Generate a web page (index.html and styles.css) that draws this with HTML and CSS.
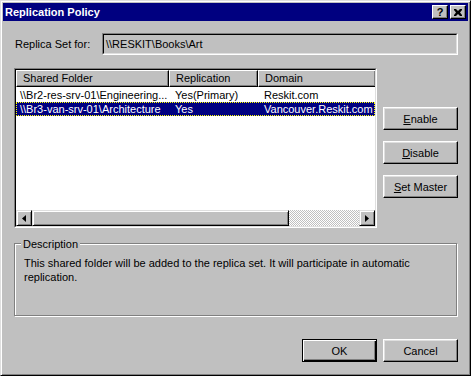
FILE: index.html
```html
<!DOCTYPE html>
<html lang="en">
<head>
  <meta charset="UTF-8" />
  <title>Replication Policy</title>
  <link rel="stylesheet" href="styles.css">
</head>
<body>
  <div class="window">
    <div class="titlebar">
      <span class="title">Replication Policy</span>
      <div class="caption-buttons">
        <span class="cap-btn help">?</span>
        <span class="cap-btn">
          <svg width="8" height="7" viewBox="0 0 8 7"><path d="M0 0h2l2 2 2-2h2v1l-2 2.5 2 2.5v1h-2l-2-2-2 2h-2v-1l2-2.5-2-2.5z" fill="#000"/></svg>
        </span>
      </div>
    </div>

    <div class="content">
      <div class="replica-row">
        <span class="replica-label">Replica Set for:</span>
        <div class="sunken textbox-outer">
          <div class="sunken-inner textbox">\\RESKIT\Books\Art</div>
        </div>
      </div>

      <div class="main-row">
        <div class="sunken listview">
          <div class="sunken-inner list-inner">
            <div class="list-body">
              <div class="list-header">
                <div class="head-cell">Shared Folder</div>
                <div class="head-cell">Replication</div>
                <div class="head-cell">Domain</div>
              </div>
              <div class="list-row">
                <div class="cell first">\\Br2-res-srv-01\Engineering...</div>
                <div class="cell">Yes(Primary)</div>
                <div class="cell">Reskit.com</div>
              </div>
              <div class="list-row selected">
                <div class="cell first">\\Br3-van-srv-01\Architecture</div>
                <div class="cell">Yes</div>
                <div class="cell">Vancouver.Reskit.com</div>
              </div>
            </div>
            <div class="hscroll">
              <div class="raised scroll-btn">
                <svg width="4" height="7" viewBox="0 0 4 7"><path d="M4 0v7L0 3.5z" fill="#000"/></svg>
              </div>
              <div class="raised scroll-thumb"></div>
              <div class="scroll-track"></div>
              <div class="raised scroll-btn">
                <svg width="4" height="7" viewBox="0 0 4 7"><path d="M0 0v7l4-3.5z" fill="#000"/></svg>
              </div>
            </div>
          </div>
        </div>

        <div class="side-buttons">
          <button class="btn"><u>E</u>nable</button>
          <button class="btn"><u>D</u>isable</button>
          <button class="btn"><u>S</u>et Master</button>
        </div>
      </div>

      <div class="groupbox">
        <span class="group-label">Description</span>
        <p class="group-text">This shared folder will be added to the replica set. It will participate in automatic replication.</p>
      </div>

      <div class="dialog-buttons">
        <button class="btn default">OK</button>
        <button class="btn">Cancel</button>
      </div>
    </div>
  </div>
</body>
</html>
```

FILE: styles.css
```css
body {
  margin: 0;
  font-family: 'Liberation Sans', Arial, sans-serif;
  font-size: 11px;
  color: #000;
  background: #c0c0c0;
}

.window {
  width: 471px;
  height: 376px;
  box-sizing: border-box;
  background: #c0c0c0;
  border: 1px solid;
  border-color: #dfdfdf #000 #000 #dfdfdf;
  box-shadow: inset 1px 1px #fff, inset -1px -1px #808080;
  padding: 2px;
  display: flex;
  flex-direction: column;
}

.titlebar {
  height: 18px;
  background: #000080;
  color: #fff;
  display: flex;
  align-items: center;
  justify-content: space-between;
}

.title {
  font-weight: bold;
  padding-left: 2px;
  line-height: 18px;
}

.caption-buttons {
  display: flex;
  gap: 2px;
  margin-right: 2px;
}

.cap-btn {
  width: 16px;
  height: 14px;
  box-sizing: border-box;
  background: #c0c0c0;
  border: 1px solid;
  border-color: #fff #000 #000 #fff;
  box-shadow: inset -1px -1px #808080;
  display: flex;
  align-items: center;
  justify-content: center;
  color: #000;
}

.help {
  font-weight: bold;
  font-size: 11px;
  line-height: 12px;
}

.content {
  flex: 1;
  padding: 0 10px 0 11px;
  display: flex;
  flex-direction: column;
}

.replica-row {
  margin-top: 12px;
  height: 22px;
  display: flex;
  align-items: center;
}

.replica-label {
  width: 88px;
  padding-left: 1px;
  box-sizing: border-box;
}

/* two-line sunken edge */
.sunken {
  border: 1px solid;
  border-color: #808080 #fff #fff #808080;
  box-sizing: border-box;
}

.sunken-inner {
  border: 1px solid;
  border-color: #000 #dfdfdf #dfdfdf #000;
  box-sizing: border-box;
  height: 100%;
}

.textbox-outer {
  flex: 1;
  height: 22px;
}

.textbox {
  padding-left: 2px;
  line-height: 18px;
}

.main-row {
  margin-top: 13px;
  display: flex;
}

.listview {
  width: 363px;
  height: 160px;
}

.list-inner {
  display: flex;
  flex-direction: column;
}

.list-body {
  flex: 1;
  background: #fff;
  overflow: hidden;
}

.list-header,
.list-row {
  display: grid;
  grid-template-columns: 153px 89px 118px;
}

.list-header {
  height: 17px;
  margin-bottom: 1px;
}

.head-cell {
  background: #c0c0c0;
  border: 1px solid;
  border-color: #fff #000 #000 #fff;
  box-shadow: inset -1px -1px #808080;
  padding-left: 6px;
  line-height: 14px;
  white-space: nowrap;
}

.list-row {
  height: 14px;
  line-height: 14px;
  white-space: nowrap;
}

.cell {
  padding-left: 6px;
  overflow: hidden;
}

.cell.first {
  padding-left: 4px;
}

.list-row.selected {
  background: #000080;
  color: #fff;
  outline: 1px dotted #ffff00;
  outline-offset: -1px;
}

.hscroll {
  height: 16px;
  display: flex;
}

.raised {
  box-sizing: border-box;
  background: #c0c0c0;
  border: 1px solid;
  border-color: #dfdfdf #000 #000 #dfdfdf;
  box-shadow: inset 1px 1px #fff, inset -1px -1px #808080;
}

.scroll-btn {
  width: 16px;
  display: flex;
  align-items: center;
  justify-content: center;
}

.scroll-thumb {
  width: 257px;
}

.scroll-track {
  flex: 1;
  background: repeating-conic-gradient(#c0c0c0 0 25%, #fff 0 50%) 0 0 / 2px 2px;
}

.side-buttons {
  margin-left: 6px;
  margin-top: 39px;
  display: flex;
  flex-direction: column;
  gap: 11px;
}

.btn {
  width: 75px;
  height: 23px;
  padding: 0;
  font-family: inherit;
  font-size: 11px;
  color: #000;
  background: #c0c0c0;
  border: 1px solid;
  border-color: #fff #000 #000 #fff;
  box-shadow: inset -1px -1px #808080, inset 1px 1px #dfdfdf;
}

.btn.default {
  border-color: #000;
  box-shadow: inset 1px 1px #fff, inset -1px -1px #000, inset -2px -2px #808080;
}

.groupbox {
  position: relative;
  margin-top: 15px;
  width: 443px;
  height: 73px;
  box-sizing: border-box;
  border: 1px solid #808080;
  box-shadow: inset 1px 1px #fff, 1px 1px #fff;
}

.group-label {
  position: absolute;
  top: -7px;
  left: 6px;
  padding: 0 2px;
  background: #c0c0c0;
  line-height: 14px;
}

.group-text {
  margin: 12px 8px 0 9px;
  line-height: 14px;
}

.dialog-buttons {
  margin-top: 23px;
  display: flex;
  justify-content: flex-end;
  gap: 6px;
}
```
